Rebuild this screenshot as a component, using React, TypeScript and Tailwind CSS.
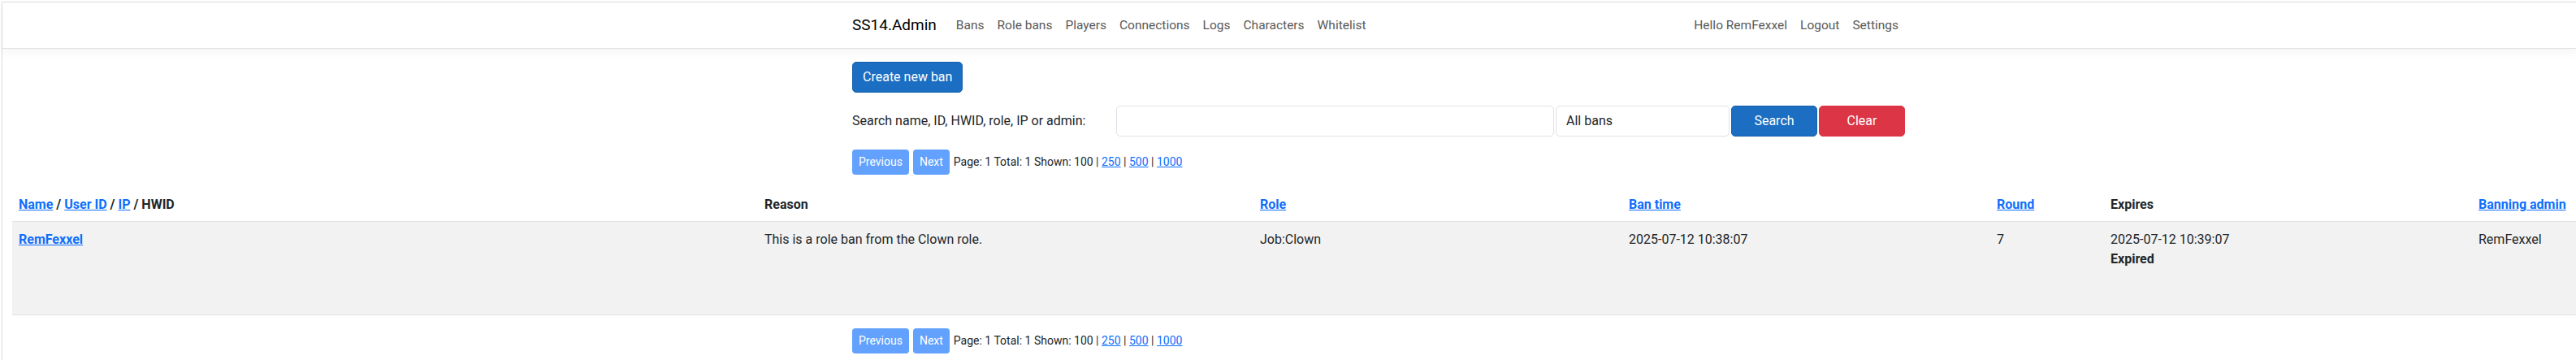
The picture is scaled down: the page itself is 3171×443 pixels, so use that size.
import React from "react";

const font = { fontFamily: "Roboto, 'Noto Sans', Arial, sans-serif" };

function NavLink({ children }: { children: React.ReactNode }) {
  return <a className="px-2 text-[15.5px] leading-6 text-[#595959]">{children}</a>;
}

function Pager() {
  return (
    <div className="flex items-center h-[31px] text-[14px] leading-[21px] text-[#212529]">
      <span className="h-[31px] px-2 flex items-center rounded-[4px] bg-[#62a1fe] text-white">Previous</span>
      <span className="ml-[5px] h-[31px] px-2 flex items-center rounded-[4px] bg-[#62a1fe] text-white">Next</span>
      <span className="ml-[5px]">
        Page: 1 Total: 1 Shown: 100 | <a className="text-[#0d6efd] underline">250</a> |{" "}
        <a className="text-[#0d6efd] underline">500</a> | <a className="text-[#0d6efd] underline">1000</a>
      </span>
    </div>
  );
}

export default function App() {
  const link = "text-[#0d6efd] underline";
  return (
    <div className="w-[3171px] h-[443px] overflow-hidden bg-white text-[#212529]" style={font}>
      <div className="mt-[2px] ml-[2px] border-t border-l border-[#dcdcdc] h-[441px]">
        <nav className="h-[57px] border-b border-[#dee2e6] bg-white shadow-[0_4px_12px_rgba(0,0,0,0.05)]">
          <div className="ml-[1046px] w-[1296px] h-[56px] flex items-center">
            <span className="text-[19px] leading-[30px] text-black mr-4">SS14.Admin</span>
            <NavLink>Bans</NavLink>
            <NavLink>Role bans</NavLink>
            <NavLink>Players</NavLink>
            <NavLink>Connections</NavLink>
            <NavLink>Logs</NavLink>
            <NavLink>Characters</NavLink>
            <NavLink>Whitelist</NavLink>
            <div className="ml-auto flex items-center">
              <NavLink>Hello RemFexxel</NavLink>
              <NavLink>Logout</NavLink>
              <NavLink>Settings</NavLink>
            </div>
          </div>
        </nav>
        <main>
          <div className="ml-[1046px] w-[1296px] pt-4">
            <button className="h-[38px] px-3 rounded-[5px] bg-[#1b6ec2] border border-[#1861ac] text-white text-[16px] leading-6">
              Create new ban
            </button>
            <div className="mt-4 flex items-center h-[38px] gap-[2px]">
              <label className="w-[323px] text-[16px] leading-6">Search name, ID, HWID, role, IP or admin:</label>
              <input className="flex-1 h-[38px] rounded-[5px] border border-[#dee2e6] px-3" />
              <div className="w-[214px] h-[38px] rounded-[5px] border border-[#dee2e6] px-3 flex items-center text-[16px]">All bans</div>
              <button className="w-[106px] h-[38px] rounded-[5px] bg-[#1b6ec2] border border-[#1861ac] text-white text-[16px]">Search</button>
              <button className="w-[106px] h-[38px] rounded-[5px] bg-[#dc3545] border border-[#dc3545] text-white text-[16px]">Clear</button>
            </div>
            <div className="mt-4">
              <Pager />
            </div>
          </div>
          <table className="mt-4 ml-[12px] w-[3156px] table-fixed border-collapse text-[16px] leading-6">
            <colgroup>
              <col className="w-[918px]" />
              <col className="w-[610px]" />
              <col className="w-[454px]" />
              <col className="w-[453px]" />
              <col className="w-[140px]" />
              <col className="w-[453px]" />
              <col className="w-[128px]" />
            </colgroup>
            <thead>
              <tr className="h-[41px] border-b border-[#dee2e6] text-left font-bold">
                <th className="px-2 pt-[9px] pb-[7px] whitespace-nowrap">
                  <a className={link}>Name</a> / <a className={link}>User ID</a> / <a className={link}>IP</a> / HWID
                </th>
                <th className="px-2 pt-[9px] pb-[7px]">Reason</th>
                <th className="px-2 pt-[9px] pb-[7px]"><a className={link}>Role</a></th>
                <th className="px-2 pt-[9px] pb-[7px]"><a className={link}>Ban time</a></th>
                <th className="px-2 pt-[9px] pb-[7px]"><a className={link}>Round</a></th>
                <th className="px-2 pt-[9px] pb-[7px]">Expires</th>
                <th className="px-2 pt-[9px] pb-[7px] whitespace-nowrap"><a className={link}>Banning admin</a></th>
              </tr>
            </thead>
            <tbody>
              <tr className="h-[115px] bg-[#f2f2f2] border-b border-[#dee2e6] align-top">
                <td className="px-2 pt-[10px]"><a className={`${link} font-bold`}>RemFexxel</a></td>
                <td className="px-2 pt-[10px]">This is a role ban from the Clown role.</td>
                <td className="px-2 pt-[10px]">Job:Clown</td>
                <td className="px-2 pt-[10px]">2025-07-12 10:38:07</td>
                <td className="px-2 pt-[10px]">7</td>
                <td className="px-2 pt-[10px]">
                  <div>2025-07-12 10:39:07</div>
                  <div className="font-bold">Expired</div>
                </td>
                <td className="px-2 pt-[10px] whitespace-nowrap">RemFexxel</td>
              </tr>
            </tbody>
          </table>
          <div className="ml-[1046px] w-[1296px] mt-4">
            <Pager />
          </div>
        </main>
      </div>
    </div>
  );
}
